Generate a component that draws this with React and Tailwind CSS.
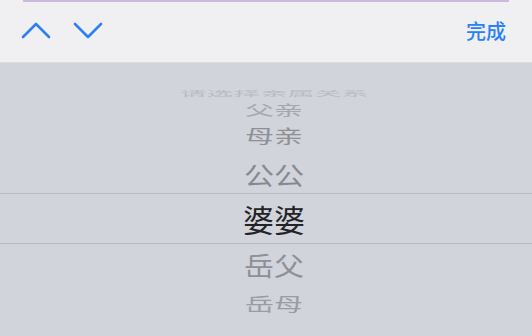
const cjk = { fontFamily: '"Noto Sans CJK SC", "Noto Sans", sans-serif' };

// wheel rows, top to bottom (selected one is rendered separately)
const above = [
  { label: '请选择亲属关系', h: 'h-[14px]', scale: 'scale-y-[0.26]', size: 'text-[27px]', color: 'text-[#b9bcc1]' },
  { label: '父亲', h: 'h-[16px]', scale: 'scale-y-[0.48]', size: 'text-[29px]', color: 'text-[#a4a7ac]' },
  { label: '母亲', h: 'h-[38px]', scale: 'scale-y-[0.62]', size: 'text-[29px]', color: 'text-[#8e9095]' },
  { label: '公公', h: 'h-[39px]', scale: 'scale-y-[0.84]', size: 'text-[30px]', color: 'text-[#87898e]' },
];

const below = [
  { label: '岳父', h: 'h-[42px]', scale: 'scale-y-[0.86]', size: 'text-[30px]', color: 'text-[#8e9095]' },
  { label: '岳母', h: 'h-[34px]', scale: 'scale-y-[0.62]', size: 'text-[29px]', color: 'text-[#9a9ca1]' },
];

const WheelRow = ({ item }) => (
  <div className={`${item.h} flex items-center justify-center`}>
    <span className={`${item.size} ${item.color} ${item.scale} leading-none whitespace-nowrap`}>
      {item.label}
    </span>
  </div>
);

const App = () => {
  return (
    <div className="w-[532px] h-[336px] overflow-hidden bg-[#d1d4da] flex flex-col" style={cjk}>
      {/* Toolbar */}
      <div className="h-[63px] shrink-0 bg-[#f0f0f3] border-b border-[#dcdce0] flex flex-col">
        <div className="h-[2px] mx-[23px] bg-[#cdb8df]" />
        <div className="flex-1 flex items-center justify-between pl-[20px] pr-[26px] pb-[3px]">
          <div className="flex items-center gap-[20px]">
            <svg width="32" height="20" viewBox="0 0 32 20" fill="none">
              <polyline points="3,16 16,3 29,16" stroke="#2b80f6" strokeWidth="2.6" strokeLinecap="round" strokeLinejoin="round" />
            </svg>
            <svg width="32" height="20" viewBox="0 0 32 20" fill="none">
              <polyline points="3,3 16,16 29,3" stroke="#2b80f6" strokeWidth="2.6" strokeLinecap="round" strokeLinejoin="round" />
            </svg>
          </div>
          <button className="text-[20px] leading-none font-medium text-[#2b80f6]">完成</button>
        </div>
      </div>

      {/* Picker wheel */}
      <div className="flex-1 flex flex-col pt-[23px] pl-[16px]">
        {above.map(item => <WheelRow key={item.label} item={item} />)}
        <div className="h-[51px] -ml-[16px] pl-[16px] border-y border-[#b7bac0] flex items-center justify-center">
          <span className="text-[31px] leading-none text-[#232325]">婆婆</span>
        </div>
        {below.map(item => <WheelRow key={item.label} item={item} />)}
      </div>
    </div>
  );
};

export default App;
